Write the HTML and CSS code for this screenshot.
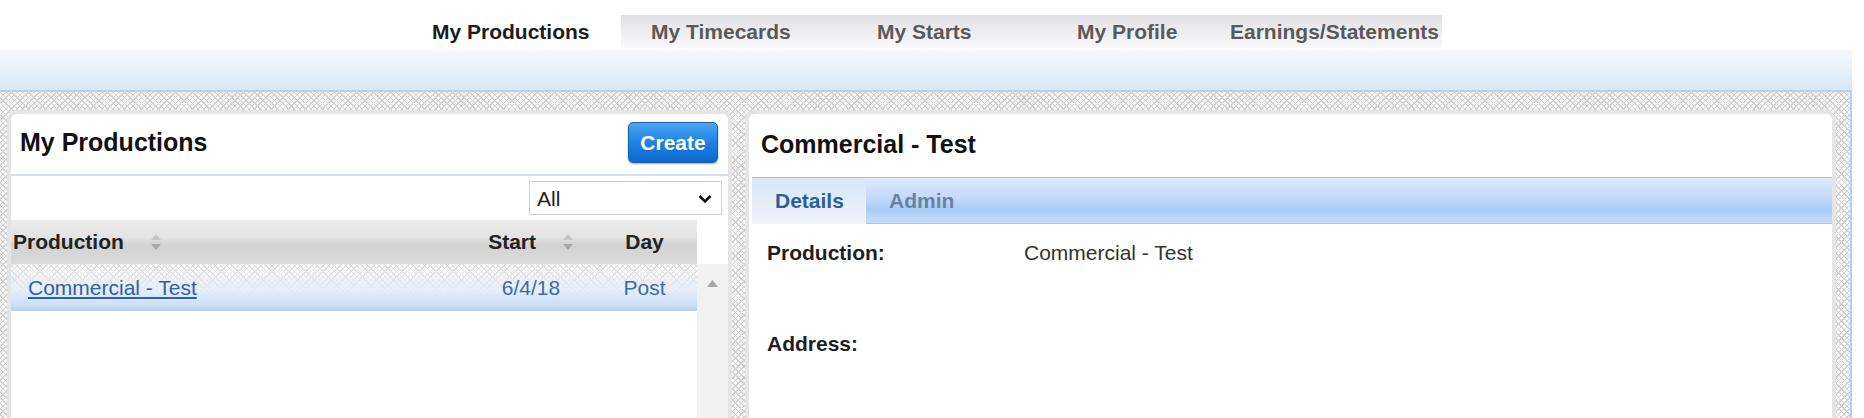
FILE: index.html
```html
<!DOCTYPE html>
<html lang="en">
<head>
  <meta charset="UTF-8" />
  <meta name="viewport" content="width=device-width, initial-scale=1.0" />
  <title>My Productions</title>
  <link rel="stylesheet" href="styles.css">
</head>
<body>
  <div class="page">
    <header class="top">
      <ul class="nav">
        <li class="active">My Productions</li>
        <li>My Timecards</li>
        <li>My Starts</li>
        <li>My Profile</li>
        <li>Earnings/Statements</li>
      </ul>
      <div class="band"></div>
    </header>

    <main class="workspace">
      <section class="panel list-panel">
        <div class="panel-head">
          <h2>My Productions</h2>
          <button class="btn-create" type="button">Create</button>
        </div>

        <div class="filter-row">
          <div class="select-wrap">
            <select class="filter">
              <option>All</option>
              <option>Active</option>
              <option>Closed</option>
            </select>
            <svg class="chevron" width="14" height="10" viewBox="0 0 14 10">
              <path d="M1.5 2 L7 7.5 L12.5 2" fill="none" stroke="#111" stroke-width="2.6" />
            </svg>
          </div>
        </div>

        <div class="grid">
          <table class="prod-table">
            <colgroup>
              <col class="c-name">
              <col class="c-start">
              <col class="c-day">
            </colgroup>
            <thead>
              <tr>
                <th class="left">Production <svg class="sort" width="12" height="18" viewBox="0 0 12 18"><path d="M6 1 L11 7 H1 Z" fill="#c4c4c4"/><path d="M6 17 L11 11 H1 Z" fill="#a9a9a9"/></svg></th>
                <th>Start <svg class="sort" width="12" height="18" viewBox="0 0 12 18"><path d="M6 1 L11 7 H1 Z" fill="#c4c4c4"/><path d="M6 17 L11 11 H1 Z" fill="#a9a9a9"/></svg></th>
                <th>Day</th>
              </tr>
            </thead>
            <tbody>
              <tr class="selected">
                <td class="left"><a href="#">Commercial - Test</a></td>
                <td>6/4/18</td>
                <td>Post</td>
              </tr>
            </tbody>
          </table>
          <div class="scrollbar">
            <svg width="11" height="7" viewBox="0 0 11 7"><path d="M5.5 0 L11 7 H0 Z" fill="#a6a6a6"/></svg>
          </div>
        </div>
      </section>

      <section class="panel detail-panel">
        <div class="panel-head">
          <h2>Commercial - Test</h2>
        </div>
        <div class="tabs">
          <span class="tab active">Details</span>
          <span class="tab">Admin</span>
        </div>
        <div class="fields">
          <div class="field">
            <span class="label">Production:</span>
            <span class="value">Commercial - Test</span>
          </div>
          <div class="field">
            <span class="label">Address:</span>
            <span class="value"></span>
          </div>
        </div>
      </section>
    </main>
  </div>
</body>
</html>
```

FILE: styles.css
```css
html, body {
  margin: 0;
  overflow: hidden;
}
body {
  font-family: "Liberation Sans", Arial, sans-serif;
  font-size: 21px;
  color: #222;
  background: #fff;
}
.page {
  width: 1852px;
}

/* top navigation */
.nav {
  list-style: none;
  margin: 0;
  padding: 15px 0 2px 402px;
  display: flex;
  height: 33px;
}
.nav li {
  box-sizing: border-box;
  padding-left: 30px;
  line-height: 33px;
  font-weight: bold;
  color: #595959;
  background: linear-gradient(#e1e1e5, #f9f9fb);
  white-space: nowrap;
}
.nav li.active {
  background: #fff;
  color: #1c1c1c;
}
.nav li:nth-child(1) { width: 219px; }
.nav li:nth-child(2) { width: 226px; }
.nav li:nth-child(3) { width: 200px; }
.nav li:nth-child(4) { width: 153px; }
.nav li:nth-child(5) { width: 242px; }

.band {
  height: 40px;
  background: linear-gradient(#f6f9fd, #d9e7f6);
  border-bottom: 2px solid #b7d0ed;
}

/* hatched work area */
.workspace {
  box-sizing: border-box;
  height: 340px;
  display: flex;
  gap: 13px;
  padding: 18px 14px 0 7px;
  border-right: 2px solid #b7d0ed;
  background:
    repeating-linear-gradient(45deg, #d2d2d2 0 1px, transparent 1px 4px),
    repeating-linear-gradient(-45deg, #d2d2d2 0 1px, transparent 1px 4px),
    #f7f7f7;
}

.panel {
  box-sizing: border-box;
  background: #fff;
  border: 4px solid #e5e5e5;
  border-bottom: none;
  border-radius: 10px 10px 0 0;
}
.list-panel {
  width: 725px;
  flex-shrink: 0;
}
.detail-panel {
  flex: 1;
}
.panel-head {
  display: flex;
  align-items: center;
  justify-content: space-between;
  box-sizing: border-box;
  height: 62px;
  padding: 0 10px 3px 9px;
}
.panel-head h2 {
  margin: 0;
  font-size: 25px;
  color: #111;
}
.list-panel .panel-head {
  border-bottom: 2px solid #cfe0f2;
}
.detail-panel .panel-head {
  height: 63px;
  padding-left: 12px;
}

.btn-create {
  width: 90px;
  height: 41px;
  padding: 0;
  font-family: inherit;
  font-size: 21px;
  font-weight: bold;
  color: #fff;
  background: linear-gradient(#4aa6f3, #1e82e3 50%, #0b68cf);
  border: 1px solid #1b5ea8;
  border-radius: 5px;
  box-shadow: 0 1px 2px rgba(0, 0, 0, 0.35);
  cursor: pointer;
}

/* filter */
.filter-row {
  height: 44px;
  display: flex;
  align-items: center;
  justify-content: flex-end;
  padding-right: 6px;
}
.select-wrap {
  position: relative;
}
.filter {
  appearance: none;
  -webkit-appearance: none;
  display: block;
  width: 193px;
  height: 34px;
  padding: 0 0 0 7px;
  font-family: inherit;
  font-size: 21px;
  color: #222;
  background: #fff;
  border: 1px solid #cfcfcf;
  border-radius: 0;
}
.chevron {
  position: absolute;
  right: 10px;
  top: 13px;
  pointer-events: none;
}

/* production list */
.grid {
  display: flex;
  align-items: flex-start;
}
.prod-table {
  width: 686px;
  flex-shrink: 0;
  table-layout: fixed;
  border-collapse: collapse;
}
.c-name { width: 459px; }
.c-start { width: 122px; }
.c-day { width: 105px; }

.prod-table th {
  height: 44px;
  padding: 0;
  font-weight: bold;
  text-align: center;
  white-space: nowrap;
  background: linear-gradient(#ececec, #e3e3e3 40%, #d3d3d3 55%, #dadada);
}
.prod-table th.left {
  text-align: left;
  padding-left: 2px;
}
.sort {
  vertical-align: -2px;
  margin-left: 20px;
}
.prod-table td {
  height: 47px;
  padding: 0;
  text-align: center;
  color: #3b6aa8;
}
.prod-table td.left {
  text-align: left;
  padding-left: 17px;
}
.prod-table tr.selected {
  background:
    linear-gradient(rgba(255, 255, 255, 0) 15%, rgba(228, 238, 251, 0.85) 55%, #cde0f8 85%, #b5d1f4),
    repeating-linear-gradient(45deg, #e0e0e0 0 1px, transparent 1px 4px),
    repeating-linear-gradient(-45deg, #e0e0e0 0 1px, transparent 1px 4px),
    #fafafa;
}
.prod-table a {
  color: #2f62a3;
  text-decoration: underline;
}
.scrollbar {
  box-sizing: border-box;
  width: 31px;
  height: 240px;
  margin-top: 44px;
  padding-top: 16px;
  background: #f1f1f1;
}
.scrollbar svg {
  display: block;
  margin-left: 10px;
}

/* detail tabs */
.tabs {
  display: flex;
  margin-left: 3px;
  height: 45px;
  border-top: 1px solid #9fc0e7;
  border-bottom: 1px solid #a8c8ee;
  background: linear-gradient(#dce9fb, #c2d9f8 45%, #a9ccf6 70%, #c6ddf9);
}
.tab {
  box-sizing: border-box;
  padding-left: 23px;
  line-height: 45px;
  font-weight: bold;
  color: #6882a5;
}
.tab.active {
  width: 114px;
  height: 46px;
  margin-bottom: -1px;
  color: #2c5e9c;
  background: linear-gradient(#d9e6f8, #eef4fc);
}

.fields {
  padding: 17px 0 0 18px;
}
.field {
  display: flex;
  min-height: 91px;
  line-height: 24px;
}
.label {
  width: 257px;
  flex-shrink: 0;
  font-weight: bold;
  color: #1e1e1e;
}
.value {
  color: #333;
}
```
